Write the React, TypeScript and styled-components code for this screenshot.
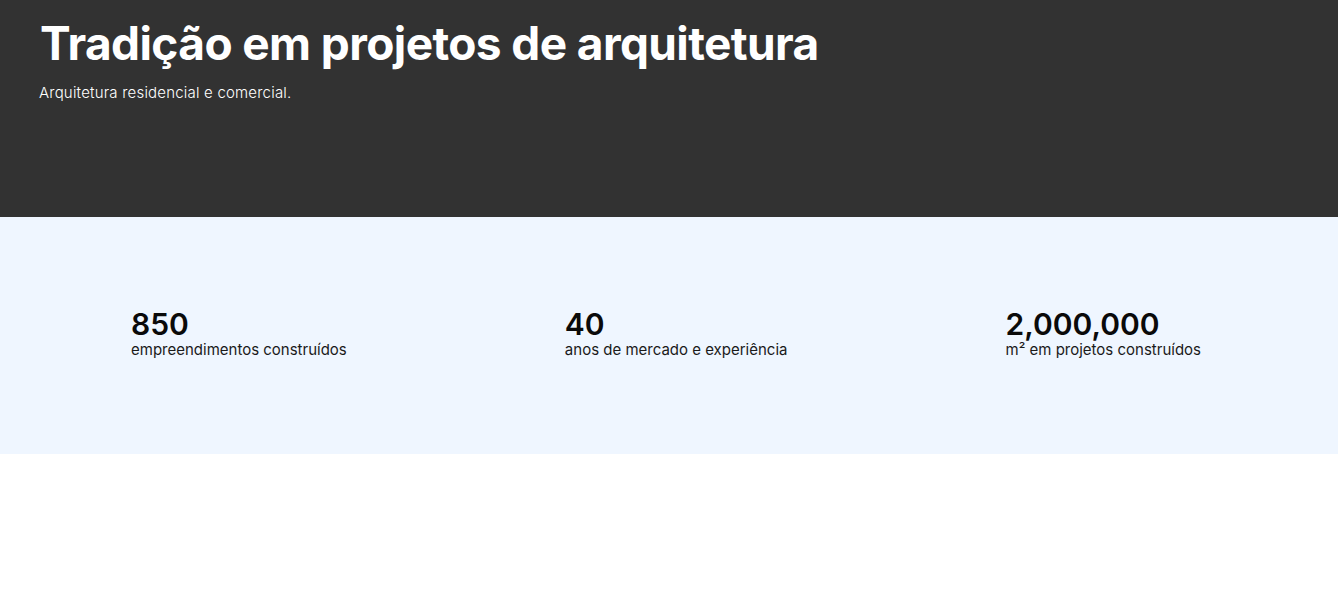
import React from "react";
import styled, { createGlobalStyle } from "styled-components";

const Global = createGlobalStyle`
  html, body { margin: 0; padding: 0; background: #ffffff; }
  body { font-family: Inter, "Noto Sans", sans-serif; }
  * { box-sizing: border-box; }
`;

const Hero = styled.header`
  background: #323232;
  color: #ffffff;
  height: 217px;
  padding: 15px 40px 0;
`;

const Title = styled.h1`
  margin: 0;
  font-size: 46px;
  font-weight: 700;
  line-height: 56px;
  letter-spacing: -0.6px;
`;

const Subtitle = styled.p`
  margin: 12px 0 0 -1px;
  font-size: 15px;
  font-weight: 300;
  line-height: 20px;
  letter-spacing: 0.2px;
`;

const Stats = styled.section`
  background: #eff6ff;
  height: 237px;
  display: flex;
  align-items: center;
  justify-content: space-between;
  padding: 0 137px 4px 131px;
  color: #0a0a0a;
`;

const Stat = styled.div`
  display: flex;
  flex-direction: column;
`;

const Value = styled.span`
  font-size: 30px;
  font-weight: 600;
  line-height: 32px;
`;

const Label = styled.span`
  font-size: 15px;
  font-weight: 400;
  line-height: 20px;
  color: #1a1a1a;
`;

const stats = [
  { value: "850", label: "empreendimentos construídos" },
  { value: "40", label: "anos de mercado e experiência" },
  { value: "2,000,000", label: "m² em projetos construídos" },
];

export default function App() {
  return (
    <>
      <Global />
      <Hero>
        <Title>Tradição em projetos de arquitetura</Title>
        <Subtitle>Arquitetura residencial e comercial.</Subtitle>
      </Hero>
      <Stats>
        {stats.map((s) => (
          <Stat key={s.value}>
            <Value>{s.value}</Value>
            <Label>{s.label}</Label>
          </Stat>
        ))}
      </Stats>
    </>
  );
}
